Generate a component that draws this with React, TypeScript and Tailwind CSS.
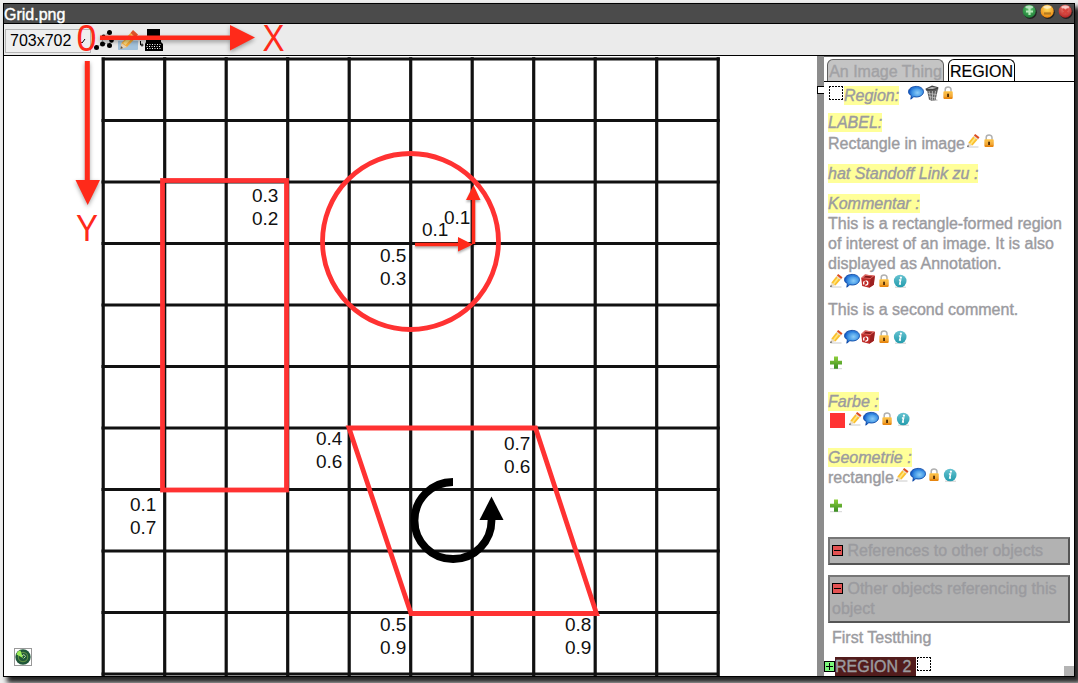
import React from "react";

const RED = "#ff2a1a";

function Pencil() {
  return (
    <svg className="block h-4 w-4 shrink-0" viewBox="0 0 16 16">
      <path d="M3 14h10.500" stroke="#d3d3d3" strokeWidth="1.200" />
      <path d="M2 14.200l1.600-5 3.800 3z" fill="#e9ddcc" />
      <path d="M2 14.200l.9-2.200 1.400 1.200z" fill="#555" />
      <path d="M3.400 9.500L8.600 3l4.400 3.200-5.500 6.400z" fill="#fbc02e" />
      <path d="M4.900 10.500L10 3.900l1.400 1-5.200 6.600z" fill="#ffe57c" />
      <path d="M8.100 3.500l.9-1 4.600 3.400-.9 1z" fill="#e8ddd3" />
      <path d="M8.900 2.600L10.200.9l4.300 3.300-1.300 1.700z" fill="#dd4d1f" />
    </svg>
  );
}

function Bubble() {
  return (
    <svg className="block h-4 w-4 shrink-0" viewBox="0 0 16 16">
      <defs>
        <radialGradient id="bubble" cx=".6" cy=".5" r=".6">
          <stop offset="0" stopColor="#8ccdf8" />
          <stop offset=".6" stopColor="#3e93e4" />
          <stop offset="1" stopColor="#0b4fc0" />
        </radialGradient>
      </defs>
      <path
        d="M8.200 1.400C12.300 1.400 15.500 3.600 15.500 6.700S12.300 12 8.200 12c-.9 0-1.700-.1-2.400-.3L2.800 14.200l.6-3.600C1.600 9.700.5 8.300.5 6.700.5 3.600 4 1.400 8.200 1.400z"
        fill="url(#bubble)"
        stroke="#0d48a5"
        strokeWidth=".9"
      />
      <path d="M3 4.500c2-2.300 8-2.500 10.200-.2" fill="none" stroke="#2a7bdc" strokeWidth="1" />
    </svg>
  );
}

function Lock() {
  return (
    <svg className="block h-4 w-4 shrink-0" viewBox="0 0 16 16">
      <defs>
        <linearGradient id="lock" x1="0" y1="0" x2="0" y2="1">
          <stop offset="0" stopColor="#ffc64a" />
          <stop offset="1" stopColor="#e5820c" />
        </linearGradient>
      </defs>
      <path d="M5.200 7V4.400C5.200 1.200 11 1.200 11 4.400V7" fill="none" stroke="#b0b0b0" strokeWidth="1.500" />
      <rect x="3.400" y="6.300" width="9.300" height="7.600" rx=".8" fill="url(#lock)" />
      <path d="M3.700 9h8.700M3.700 11h8.700" stroke="#ffd071" strokeWidth=".5" />
      <rect x="7.100" y="8.700" width="1.900" height="3.300" fill="#573209" />
    </svg>
  );
}

function Info() {
  return (
    <svg className="block h-4 w-4 shrink-0" viewBox="0 0 16 16">
      <defs>
        <linearGradient id="info" x1="0" y1="0" x2="0" y2="1">
          <stop offset="0" stopColor="#67c3d1" />
          <stop offset="1" stopColor="#229bac" />
        </linearGradient>
      </defs>
      <path d="M3 14.200h11" stroke="#cecece" strokeWidth="1" />
      <circle cx="8.200" cy="8" r="6.300" fill="url(#info)" />
      <circle cx="8.900" cy="4.700" r="1.100" fill="#fff" />
      <path d="M6.900 7h1.700l-.9 4h1.300" fill="none" stroke="#fff" strokeWidth="1.500" />
    </svg>
  );
}

function RecycleBox() {
  return (
    <svg className="block h-4 w-4 shrink-0" viewBox="0 0 16 16">
      <path d="M1.200 5L5 1.500l9.800 1.300-1 9-4.500 3L2.200 13z" fill="#bf2b28" />
      <path d="M1.200 5L5 1.500l9.800 1.300L10.600 6z" fill="#e36b66" />
      <path d="M3.500 4.600L5.700 2.700l7 .9-2.500 1.500z" fill="#841919" />
      <path d="M10.600 6L14.800 2.800l-1 9-4.500 3z" fill="#9b2020" />
      <circle cx="5.700" cy="10" r="2.100" fill="none" stroke="#fff" strokeWidth="1.300" strokeDasharray="3.400 1" />
    </svg>
  );
}

function Trash() {
  return (
    <svg className="block h-4 w-4 shrink-0" viewBox="0 0 16 16">
      <path d="M4 14l9 2 1-1-2-1z" fill="#cfcfcf" />
      <path d="M3 5h10.800l-2.300 10.200-4 .6-2.500-1.300z" fill="#5c5c5c" />
      <path d="M5 6l2 9M8.400 6l.2 9.500M11.500 6l-1.300 9M4.200 8.500l8.400 1M4.600 11.500l7.200 1.300" stroke="#c4c4c4" strokeWidth=".8" />
      <path d="M1.400 3.700L8 .6l6.400 1.600-.3 2.600-7 .4-4.900.6z" fill="#444" />
      <path d="M3 3.800l5-1.900 5 .8-4.500 1.400z" fill="#b9b9b9" />
    </svg>
  );
}

function Plus() {
  return (
    <svg className="block h-4 w-4 shrink-0" viewBox="0 0 16 16">
      <defs>
        <linearGradient id="plus" x1="0" y1="0" x2="0" y2="1">
          <stop offset="0" stopColor="#8fcf3c" />
          <stop offset="1" stopColor="#388c22" />
        </linearGradient>
      </defs>
      <path d="M2 13.700h12" stroke="#d4d4d4" strokeWidth="1" />
      <path d="M6 1.500h4v4.300h4v3.700h-4v4.200H6V9.500H2V5.800h4z" fill="url(#plus)" />
    </svg>
  );
}

function CheckBox() {
  return (
    <svg className="block h-[14px] w-[14px] shrink-0" viewBox="0 0 14 14">
      <path
        d="M0 .5h14M0 13.500h14M.5 0v14M13.500 0v14"
        fill="none"
        stroke="#000"
        strokeDasharray="2 1"
        shapeRendering="crispEdges"
      />
    </svg>
  );
}

function Toggle({ open }: { open?: boolean }) {
  return (
    <svg className="inline-block h-[11px] w-[11px] shrink-0 align-baseline" viewBox="0 0 11 11">
      <rect x=".5" y=".5" width="10" height="10" fill={open ? "#e35252" : "#7bf77b"} stroke="#000" />
      <path d={open ? "M2 5.500h7" : "M2 5.500h7M5.500 2v7"} stroke="#000" />
    </svg>
  );
}

function Label({ children }: { children: React.ReactNode }) {
  return (
    <span className="block h-[19px] shrink-0 self-start bg-[#ffff99] leading-[19px] whitespace-pre italic">{children}</span>
  );
}

function CommentTools() {
  return (
    <div className="flex h-4 shrink-0">
      <Pencil />
      <Bubble />
      <RecycleBox />
      <Lock />
      <Info />
    </div>
  );
}

function TitleButton({ kind }: { kind: "plus" | "minus" | "close" }) {
  const dark = { plus: "#1d7a36", minus: "#ea850f", close: "#b52222" }[kind];
  const light = { plus: "#5fc96f", minus: "#ffe063", close: "#f58a7c" }[kind];
  const glyph = { plus: "M4 7.500h7M7.500 4v7", minus: "M4 9.500h7", close: "M5 5l5 5M10 5l-5 5" }[kind];
  const mark = { plus: "#b5eab9", minus: "#b37a20", close: "#d6423b" }[kind];
  return (
    <svg className="block h-[15px] w-[15px]" viewBox="0 0 15 15">
      <defs>
        <radialGradient id={kind + "-orb"} cx=".5" cy=".3" r=".7">
          <stop offset="0" stopColor={light} />
          <stop offset="1" stopColor={dark} />
        </radialGradient>
      </defs>
      <circle cx="8.200" cy="8.300" r="6.600" fill="#222" />
      <circle cx="7.200" cy="7.200" r="6.500" fill={"url(#" + kind + "-orb)"} />
      <ellipse cx="7.200" cy="3.100" rx="3.900" ry="1.700" fill="#fff" opacity=".6" />
      <path d={glyph} stroke={mark} strokeWidth="2.200" />
    </svg>
  );
}

const stops = Array.from({ length: 11 }, (_, i) => i * 61.5);

const marks: [number, number, string][] = [
  [252, 202, "0.3"], [252, 225, "0.2"],
  [380, 262, "0.5"], [380, 285, "0.3"],
  [422, 236, "0.1"], [444, 224, "0.1"],
  [316, 445, "0.4"], [316, 468, "0.6"],
  [504, 450, "0.7"], [504, 473, "0.6"],
  [130, 511, "0.1"], [130, 534, "0.7"],
  [380, 631, "0.5"], [380, 654, "0.9"],
  [565, 631, "0.8"], [565, 654, "0.9"],
];

function Canvas() {
  return (
    <svg className="block h-[620px] w-[813px]" viewBox="4 56 813 620">
      <g stroke="#111" strokeWidth="3.200">
        {stops.map((d) => (
          <path key={d} d={`M${103.200 + d} 57.300V676M101.500 ${59 + d}H719.800`} />
        ))}
      </g>
      <g fill="none" stroke="#ff3232" strokeWidth="4.800">
        <rect x="162.500" y="180.500" width="124" height="309.500" />
        <circle cx="410.500" cy="241.500" r="88" />
        <path d="M349 428H535.500L596.500 613.500H411z" />
      </g>
      <g className="[font-family:'Liberation_Sans',sans-serif] text-[19px]" fill="#111">
        {marks.map(([x, y, t]) => (
          <text key={x + "-" + y} x={x} y={y}>
            {t}
          </text>
        ))}
      </g>
      <path d="M453 482A38.500 38.500 0 1 0 491.500 520" fill="none" stroke="#000" strokeWidth="7.800" />
      <path d="M491.500 496.500l12 23.500h-24z" fill="#000" />
      <g className="drop-shadow-[0_2px_1px_rgba(0,0,0,0.3)]" fill={RED} stroke={RED}>
        <path d="M415 244.500H460M473.500 244V199" strokeWidth="3.500" />
        <path d="M458 237V251.500L473 244.500zM466 200H480.500L473.500 185z" stroke="none" />
      </g>
      <rect x="14.500" y="648.500" width="17" height="17" fill="#fff" stroke="#999" />
      <circle cx="23" cy="657" r="7.700" fill="#1f5639" />
      <circle cx="23" cy="657" r="4.700" fill="none" stroke="#5c8d43" strokeWidth="1.200" />
      <path d="M23 658L16.500 654.500Q17.500 650.500 20.500 650.500z" fill="#9cee58" />
      <path d="M22 656l2-1.500 1.500 2-2 2" fill="none" stroke="#b8d6a4" strokeWidth="1" />
    </svg>
  );
}

function Axes() {
  return (
    <svg className="pointer-events-none absolute top-0 left-0 h-[260px] w-[300px]" viewBox="0 0 300 260">
      <g className="drop-shadow-[0_2px_2px_rgba(0,0,0,0.35)]" fill={RED}>
        <path d="M100 35.500H230V25L255 37.500L230 50.500V40H100z" />
        <path d="M84.800 61H89.800V180H100L87.700 205L75.500 180H84.800z" />
      </g>
      <g className="[font-family:'Liberation_Sans',sans-serif] text-[36px]" fill={RED}>
        <text x="76.500" y="50.500" textLength="20" lengthAdjust="spacingAndGlyphs">0</text>
        <text x="262.500" y="51" textLength="22" lengthAdjust="spacingAndGlyphs">X</text>
        <text x="76" y="240.500" textLength="22" lengthAdjust="spacingAndGlyphs">Y</text>
      </g>
    </svg>
  );
}

function Toolbar() {
  return (
    <div className="flex h-[32px] shrink-0 border-b border-black bg-[#ebebeb] pt-[5px] pl-px">
      <div className="flex h-6 w-[86px] shrink-0 items-center justify-between border border-[#b5b5b5] bg-[#efefef] pr-1 pl-1 text-[16px] leading-5 text-black">
        703x702
        <svg className="h-2 w-[7px]" viewBox="0 0 7 8">
          <path d="M1 4l2 2 3-4" fill="none" stroke="#000" />
        </svg>
      </div>
      <svg className="ml-[2px] h-6 w-[23px] shrink-0" viewBox="93 29 23 24">
        <path d="M96 47l6-3 1-8 7-4M103 44l7-1 2-4" fill="none" stroke="#555" strokeWidth=".7" strokeDasharray="1 1" />
        <g fill="#000">
          <circle cx="96.500" cy="47.500" r="2.500" />
          <circle cx="102.500" cy="44" r="2.500" />
          <circle cx="109.500" cy="45.500" r="2.500" />
          <circle cx="103.500" cy="36.500" r="2" />
          <circle cx="109.500" cy="32.500" r="2.500" />
          <circle cx="111.500" cy="40.500" r="2.300" />
        </g>
      </svg>
      <svg className="h-6 w-6 shrink-0" viewBox="116 29 24 24">
        <path d="M118 41l2-5h15l3 5v8q0 1-1 1h-18q-1 0-1-1z" fill="#d2e0ea" />
        <path d="M118 41h20v8q0 1-1 1h-18q-1 0-1-1z" fill="#a3c2db" />
        <path d="M120.500 49l1-6 9-10 6 4-9.500 10z" fill="#f8ac37" />
        <path d="M123 43l9-9 2.500 1.500-9 9.500z" fill="#ffdc7c" />
        <path d="M121.500 43l5.500 4-6.500 2z" fill="#e8d3b4" />
        <path d="M130.500 33l2.500-3 5 4.500-2.500 3z" fill="#df532b" />
        <path d="M120.500 49l.5-3 2 2z" fill="#555" />
      </svg>
      <svg className="h-6 w-6 shrink-0" viewBox="140 29 24 24">
        <path d="M147 29h13v7h-13zM146 38h15v4l2 2v7h-18v-7l1-2z" fill="#000" />
        <path
          d="M147 44.500h15M146.500 46.500h15M147 48.500h15"
          stroke="#fff"
          strokeWidth="1"
          strokeDasharray="1 1.500"
        />
        <path d="M140.500 41v4h3M142 43.500v3" fill="none" stroke="#000" />
      </svg>
    </div>
  );
}

function Sidebar() {
  return (
    <aside className="flex w-[250px] shrink-0 flex-col overflow-hidden text-[16px] leading-5 text-[#9b9b9f] [-webkit-text-stroke:0.4px]">
      <div className="flex h-[26px] shrink-0 items-end gap-1 border-t border-b border-t-[#666] border-b-black pl-[3px]">
        <div className="flex h-[22px] w-[117px] items-center justify-center rounded-t-[6px] border border-b-0 border-[#606060] bg-[#c4c4c4] pt-0.5 whitespace-nowrap text-[#a2a2a5]">
          An Image Thing
        </div>
        <div className="flex h-[22px] w-[67px] items-center justify-center rounded-t-[6px] border border-b-0 border-black bg-white pt-0.5 text-black [-webkit-text-stroke:0.2px]">
          REGION
        </div>
      </div>
      <div className="flex flex-1 flex-col pt-1 pl-1">
        <div className="flex h-[19px] shrink-0 pl-px">
          <CheckBox />
          <span className="ml-px" />
          <Label>Region:</Label>
          <div className="-mt-px ml-[9px] flex">
            <Bubble />
            <Trash />
            <Lock />
          </div>
        </div>
        <div className="mt-2 flex shrink-0 flex-col">
          <Label>LABEL:</Label>
          <div className="mt-0.5 -mb-px flex h-5">
            Rectangle in image
            <div className="-mt-px flex">
              <Pencil />
              <Lock />
            </div>
          </div>
        </div>
        <div className="mt-[11px] flex shrink-0 flex-col">
          <Label>hat Standoff Link zu :</Label>
        </div>
        <div className="mt-[11px] flex shrink-0 flex-col">
          <Label>Kommentar :</Label>
          <p className="mt-px whitespace-nowrap">
            This is a rectangle-formed region
            <br />
            of interest of an image. It is also
            <br />
            displayed as Annotation.
          </p>
          <div className="-mt-px mb-px">
            <CommentTools />
          </div>
          <p className="mt-[10px]">This is a second comment.</p>
          <div className="mt-[9px] mb-px">
            <CommentTools />
          </div>
        </div>
        <div className="mt-[9px] shrink-0">
          <Plus />
        </div>
        <div className="mt-[21px] flex shrink-0 flex-col">
          <Label>Farbe :</Label>
          <div className="flex h-[17px] pl-0.5">
            <div className="mt-0.5 mr-0.5 h-[15px] w-[15px] bg-[#ff3333]" />
            <Pencil />
            <Bubble />
            <Lock />
            <Info />
          </div>
        </div>
        <div className="mt-5 flex shrink-0 flex-col">
          <Label>Geometrie :</Label>
          <div className="mt-px flex h-5">
            rectangle
            <div className="-mt-px flex">
              <Pencil />
              <Bubble />
              <Lock />
              <Info />
            </div>
          </div>
        </div>
        <div className="mt-[10px] shrink-0">
          <Plus />
        </div>
        <div className="mt-[23px] h-7 w-[242px] shrink-0 border-2 border-t-[#777] border-r-[#555] border-b-[#555] border-l-[#777] bg-[#b2b2b2] px-0.5 pt-0.5">
          <Toggle open /> References to other objects
        </div>
        <div className="mt-[10px] h-12 w-[242px] shrink-0 border-2 border-t-[#777] border-r-[#555] border-b-[#555] border-l-[#777] bg-[#b2b2b2] px-0.5 pt-0.5">
          <Toggle open /> Other objects referencing this object
        </div>
        <div className="mt-[5px] h-5 shrink-0 pl-1">First Testthing</div>
        <div className="mt-[9px] -ml-1 flex h-[19px] shrink-0">
          <div className="flex pt-1">
            <Toggle />
          </div>
          <div className="mr-px w-[81px] bg-[#521c1c] leading-[19px] whitespace-nowrap">REGION 2</div>
          <CheckBox />
          <div className="mt-auto ml-auto h-[10px] w-[10px] bg-[#b4b4b4]" />
        </div>
      </div>
    </aside>
  );
}

export default function App() {
  return (
    <div className="relative h-[683px] w-[1078px] overflow-hidden bg-[#efefef] pt-[3px] pl-[3px] [font-family:'Liberation_Sans',sans-serif]">
      <div className="flex h-[674px] w-[1072px] flex-col border border-black bg-white shadow-[5px_5px_5px_1px_rgba(0,0,0,0.85)]">
        <header className="flex h-5 shrink-0 justify-between border-b border-black bg-[#4b4b4b]">
          <h1 className="text-[16px] leading-[21px] text-white [-webkit-text-stroke:0.4px]">Grid.png</h1>
          <div className="flex gap-[3px] pr-px">
            <TitleButton kind="plus" />
            <TitleButton kind="minus" />
            <TitleButton kind="close" />
          </div>
        </header>
        <Toolbar />
        <main className="flex h-[620px] shrink-0">
          <Canvas />
          <div className="w-[7px] shrink-0 bg-[#8c8c8c] pt-[30px]">
            <div className="h-2 w-[7px] border border-r-0 border-black bg-white" />
          </div>
          <Sidebar />
        </main>
      </div>
      <Axes />
    </div>
  );
}
